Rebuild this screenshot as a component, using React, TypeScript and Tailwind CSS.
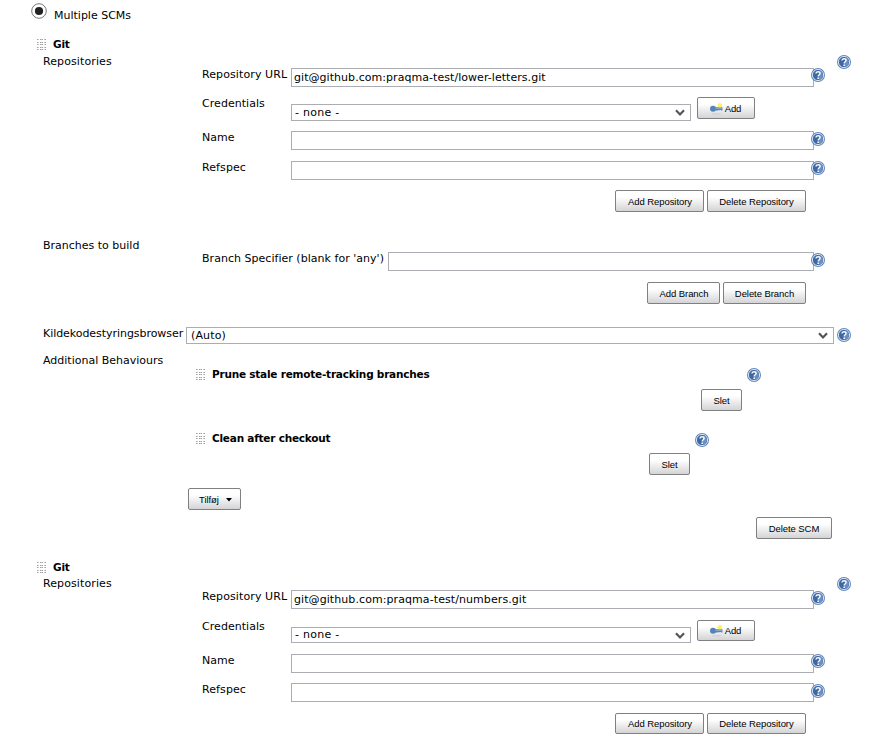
import type { ReactNode } from "react";

function Label({ children, className = "" }: { children: ReactNode; className?: string }) {
  return <div className={`shrink-0 whitespace-nowrap pt-px ${className}`}>{children}</div>;
}

function Help({ className = "" }: { className?: string }) {
  return (
    <svg viewBox="0 0 14 14" className={`relative h-[14px] w-[14px] shrink-0 ${className}`}>
      <circle cx="7" cy="7" r="7" fill="#6386b8" />
      <circle cx="7" cy="7" r="5.6" fill="#3c68a6" stroke="#d9e2ef" strokeWidth="1" />
      <path d="M8 2.2a4.9 4.9 0 0 1 0 9.6z" fill="#6b8fc2" />
      <path d="M4.9 5.5C5 3.2 9.1 3.1 9.1 5.3 9.1 6.8 7.2 6.6 7.2 8.5" fill="none" stroke="#fff" strokeWidth="1.4" />
      <path d="M6.4 9.5h1.6V11H6.4z" fill="#fff" />
    </svg>
  );
}

function Grip({ className = "" }: { className?: string }) {
  return (
    <svg viewBox="0 0 9 12" shapeRendering="crispEdges" className={`h-[12px] w-[9px] shrink-0 ${className}`}>
      {[0, 3, 5, 8, 10].map((y) =>
        [0, 3, 5, 8].map((x) => <rect key={`${y}-${x}`} x={x} y={y} width="1" height="1" fill="#a0a0a0" />),
      )}
      {[0, 3, 5, 8, 10].map((y) =>
        [1, 4, 7].map((x) => <rect key={`${y}-${x}`} x={x} y={y} width="1" height="1" fill="#c8c8c8" />),
      )}
    </svg>
  );
}

function Button({ children, className }: { children: ReactNode; className: string }) {
  return (
    <button
      className={`flex shrink-0 items-center justify-center whitespace-nowrap rounded-[2px] border border-[#808080] bg-linear-to-b from-white from-30% to-[#d4d4d6] font-['Liberation_Sans',Arial,sans-serif] text-[9.5px] leading-[12px] tracking-[-0.07px] text-black ${className}`}
    >
      {children}
    </button>
  );
}

function Field({ children, className }: { children?: ReactNode; className: string }) {
  return (
    <div className={`shrink-0 whitespace-nowrap border border-[#abadb3] bg-white pl-[2px] ${className}`}>{children}</div>
  );
}

function Select({ children, className, textClass }: { children: ReactNode; className: string; textClass: string }) {
  return (
    <div className={`flex shrink-0 justify-between whitespace-nowrap border border-[#abadb3] bg-white ${className}`}>
      <span className={textClass}>{children}</span>
      <svg viewBox="0 0 10 8" className="mr-[5px] mt-[4px] h-[8px] w-[10px]">
        <path d="M1 1.2 5 5.4 9 1.2" fill="none" stroke="#555" strokeWidth="2.2" />
      </svg>
    </div>
  );
}

function KeyIcon() {
  return (
    <svg viewBox="0 0 13 12" className="mr-[2px] h-[12px] w-[13px] shrink-0">
      <ellipse cx="6.5" cy="10.7" rx="5" ry="0.7" fill="#cfd2d6" />
      <circle cx="3" cy="5.8" r="3" fill="#5582b8" />
      <path d="M5 4.2h7.4v3.2h-1.2l-.8-.7-.8.7-.8-.7-.8.7H5z" fill="#5582b8" />
      <path d="M5.5 5.3h6.4" stroke="#9fbadb" strokeWidth="0.8" />
      <circle cx="9.9" cy="2.3" r="2.2" fill="#fbef50" opacity="0.9" />
    </svg>
  );
}

interface Offsets {
  title: string;
  titleHelp: string;
  urlLabel: string;
  urlField: string;
  urlHelp: string;
  select: string;
  selectText: string;
  add: string;
  nameHelp: string;
  refLabel: string;
  refField: string;
  buttons: string;
}

const firstOffsets: Offsets = {
  title: "mt-[1px]",
  titleHelp: "mt-[2px]",
  urlLabel: "mt-0",
  urlField: "mt-[1px]",
  urlHelp: "mt-[1px]",
  select: "h-[17px]",
  selectText: "pt-px tracking-[0.25px]",
  add: "h-[22px] pt-[2px]",
  nameHelp: "mt-[3px]",
  refLabel: "mt-[1px]",
  refField: "mt-[2px]",
  buttons: "h-[22px] pt-[2px]",
};

const secondOffsets: Offsets = {
  title: "mt-0",
  titleHelp: "mt-[1px]",
  urlLabel: "-mt-px",
  urlField: "mt-0",
  urlHelp: "mt-[1px]",
  select: "h-[16px]",
  selectText: "tracking-[0.25px]",
  add: "h-[21px] pt-px",
  nameHelp: "mt-[2px]",
  refLabel: "mt-0",
  refField: "mt-[1px]",
  buttons: "h-[21px] pt-px",
};

function GitRepository({ url, urlTracking, o }: { url: string; urlTracking: string; o: Offsets }) {
  return (
    <section>
      <div className="flex h-[23px] items-start pl-[37px]">
        <Grip className="mt-[9px]" />
        <Label className="ml-[7px] mt-[6px] text-[10.5px] font-bold tracking-[-0.22px]">Git</Label>
      </div>
      <div className="flex h-[14px] items-start pl-[43px]">
        <Label className={`w-[794px] tracking-[0.1px] ${o.title}`}>Repositories</Label>
        <Help className={o.titleHelp} />
      </div>
      <div className="flex h-[28px] items-start pl-[202px]">
        <Label className={`w-[89px] tracking-[0.1px] ${o.urlLabel}`}>Repository URL</Label>
        <Field className={`h-[19px] w-[523px] pt-[2px] leading-[13px] ${urlTracking} ${o.urlField}`}>{url}</Field>
        <Help className={`-ml-[3px] ${o.urlHelp}`} />
      </div>
      <div className="flex h-[34px] items-start pl-[202px]">
        <Label className="mt-[1px] w-[89px] tracking-[0.05px]">Credentials</Label>
        <Select className={`mt-[9px] w-[400px] pl-[3px] leading-[14px] ${o.select}`} textClass={o.selectText}>
          - none -
        </Select>
        <Button className={`ml-[6px] mt-[2px] w-[58px] pr-px ${o.add}`}>
          <KeyIcon />
          Add
        </Button>
      </div>
      <div className="flex h-[30px] items-start pl-[202px]">
        <Label className="mt-[1px] w-[89px]">Name</Label>
        <Field className="mt-[2px] h-[19px] w-[523px]" />
        <Help className={`-ml-[3px] ${o.nameHelp}`} />
      </div>
      <div className="flex h-[29px] items-start pl-[202px]">
        <Label className={`w-[89px] tracking-[0.1px] ${o.refLabel}`}>Refspec</Label>
        <Field className={`h-[19px] w-[523px] ${o.refField}`} />
        <Help className="-ml-[3px] mt-[2px]" />
      </div>
      <div className="flex h-[32px] items-start gap-[3px] pl-[615px] pt-[2px]">
        <Button className={`w-[89px] pl-px ${o.buttons}`}>Add Repository</Button>
        <Button className={`w-[99px] ${o.buttons}`}>Delete Repository</Button>
      </div>
    </section>
  );
}

function Behaviour({
  name,
  width,
  className,
  helpClass,
}: {
  name: string;
  width: string;
  className: string;
  helpClass: string;
}) {
  return (
    <div className={`flex flex-col pl-[196px] ${className}`}>
      <div className={`flex h-[21px] items-start ${width}`}>
        <Grip className="mt-px" />
        <Label className="-mt-[2px] ml-[7px] text-[10.5px] font-bold tracking-[-0.22px]">{name}</Label>
        <Help className={`ml-auto ${helpClass}`} />
      </div>
      <div className={`flex justify-end pr-[19px] ${width}`}>
        <Button className="h-[22px] w-[41px] pt-px">Slet</Button>
      </div>
    </div>
  );
}

export default function App() {
  return (
    <main className="h-[754px] w-[878px] overflow-hidden bg-white font-['DejaVu_Sans',Verdana,sans-serif] text-[11px] leading-[14px] text-black">
      <div className="flex h-[30px] items-start pl-[31px]">
        <svg viewBox="0 0 16 16" className="mt-[3px] h-[16px] w-[16px]">
          <circle cx="8" cy="8" r="7.3" fill="#fff" stroke="#777" strokeWidth="1" />
          <circle cx="8" cy="8" r="4.1" fill="#222" />
        </svg>
        <Label className="ml-[7px] mt-[8px]">Multiple SCMs</Label>
      </div>

      <GitRepository
        url="git@github.com:praqma-test/lower-letters.git"
        urlTracking="tracking-[0.05px]"
        o={firstOffsets}
      />

      <div className="flex h-[31px] items-start pl-[43px] pt-[18px]">
        <Label>Branches to build</Label>
      </div>
      <div className="flex h-[31px] items-start pl-[202px]">
        <Label className="w-[186px] tracking-[0.03px]">Branch Specifier (blank for 'any')</Label>
        <Field className="mt-[1px] h-[19px] w-[426px]" />
        <Help className="-ml-[3px] mt-[2px]" />
      </div>
      <div className="flex h-[44px] items-start gap-[3px] pl-[647px]">
        <Button className="h-[22px] w-[73px] pl-px pt-px">Add Branch</Button>
        <Button className="h-[22px] w-[83px] pt-px">Delete Branch</Button>
      </div>

      <div className="flex h-[27px] items-start pl-[43px]">
        <Label className="w-[143px] tracking-[-0.05px]">Kildekodestyringsbrowser</Label>
        <Select className="mt-[1px] h-[17px] w-[648px] pl-[4px]" textClass="pt-px tracking-[0.15px]">
          (Auto)
        </Select>
        <Help className="ml-[3px] mt-[2px]" />
      </div>
      <div className="flex h-[15px] items-start pl-[43px]">
        <Label>Additional Behaviours</Label>
      </div>

      <Behaviour
        name="Prune stale remote-tracking branches"
        width="w-[565px]"
        className="h-[64px]"
        helpClass="mt-0"
      />
      <Behaviour name="Clean after checkout" width="w-[513px]" className="h-[56px]" helpClass="mt-px" />

      <div className="flex h-[29px] items-start pl-[188px]">
        <Button className="h-[22px] w-[53px] pl-[2px] pt-px">
          Tilføj
          <svg viewBox="0 0 6 4" className="ml-[7px] h-[4px] w-[6px]">
            <path d="M0 0h6L3 3.5z" />
          </svg>
        </Button>
      </div>
      <div className="flex h-[36px] items-start pl-[756px]">
        <Button className="h-[22px] w-[76px] pt-[2px]">Delete SCM</Button>
      </div>

      <GitRepository
        url="git@github.com:praqma-test/numbers.git"
        urlTracking="tracking-[0.08px]"
        o={secondOffsets}
      />
    </main>
  );
}
